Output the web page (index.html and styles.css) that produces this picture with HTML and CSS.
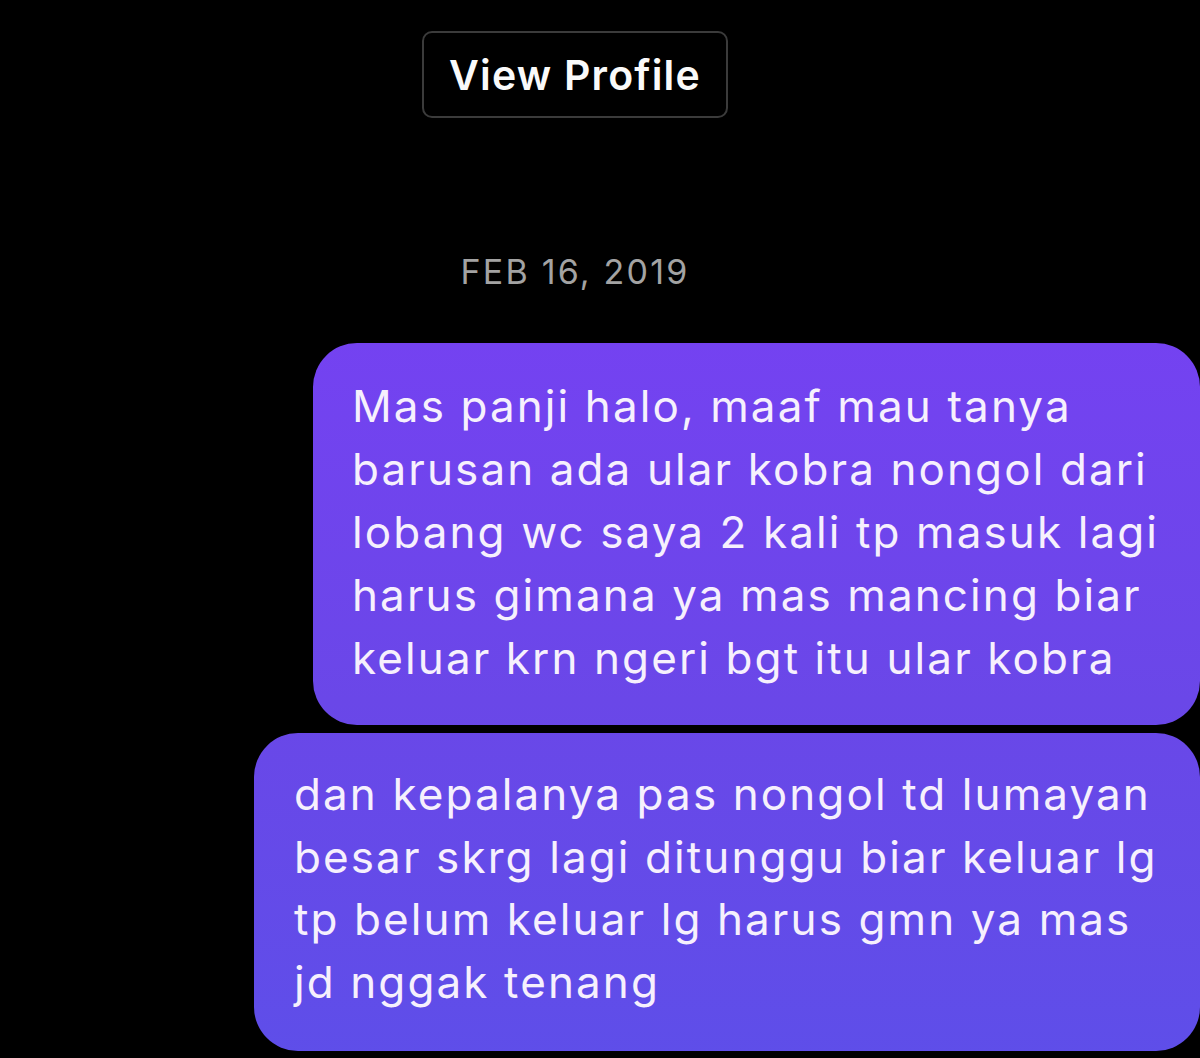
FILE: index.html
```html
<!DOCTYPE html>
<html lang="id">
<head>
<meta charset="utf-8">
<title>Chat</title>
<link rel="stylesheet" href="styles.css">
</head>
<body>
<div class="page">
  <div class="header">
    <div class="profile-btn">View Profile</div>
    <div class="date">FEB 16, 2019</div>
  </div>
  <div class="thread">
    <div class="bubble b1">
      <span class="line">Mas panji halo, maaf mau tanya</span>
      <span class="line">barusan ada ular kobra nongol dari</span>
      <span class="line">lobang wc saya 2 kali tp masuk lagi</span>
      <span class="line">harus gimana ya mas mancing biar</span>
      <span class="line">keluar krn ngeri bgt itu ular kobra</span>
    </div>
    <div class="bubble b2">
      <span class="line">dan kepalanya pas nongol td lumayan</span>
      <span class="line">besar skrg lagi ditunggu biar keluar lg</span>
      <span class="line">tp belum keluar lg harus gmn ya mas</span>
      <span class="line">jd nggak tenang</span>
    </div>
  </div>
</div>
</body>
</html>
```

FILE: styles.css
```css
html, body {
  margin: 0;
  padding: 0;
  background: #000;
  overflow: hidden;
}
body {
  font-family: Inter, "Noto Sans", "Liberation Sans", sans-serif;
  width: 1200px;
  height: 1058px;
}
.page {
  display: flex;
  flex-direction: column;
}
.header {
  width: 1150px;
  display: flex;
  flex-direction: column;
  align-items: center;
  padding-top: 31px;
}
.profile-btn {
  box-sizing: border-box;
  width: 306px;
  height: 87px;
  border: 2px solid #3b3b3b;
  border-radius: 10px;
  color: #fafafa;
  font-weight: 600;
  font-size: 41px;
  letter-spacing: 1.2px;
  display: flex;
  align-items: center;
  justify-content: center;
}
.date {
  margin-top: 133px;
  color: #a3a3a3;
  font-size: 34px;
  line-height: 42px;
  letter-spacing: 2.2px;
}
.thread {
  margin-top: 50px;
  display: flex;
  flex-direction: column;
  align-items: flex-end;
  gap: 8px;
}
.bubble {
  box-sizing: border-box;
  color: #f6f0fd;
  font-size: 44px;
  line-height: 63px;
  letter-spacing: 2.1px;
  border-radius: 44px;
  background: linear-gradient(180deg, #7442f1 340px, #6a47e8 700px, #5e4ee9 1060px);
  background-attachment: fixed;
  display: flex;
  flex-direction: column;
}
.line {
  white-space: nowrap;
}
.b1 {
  width: 887px;
  padding: 32px 40px 35px 39px;
}
.b2 {
  width: 946px;
  padding: 30px 40px 38px 40px;
  line-height: 62.5px;
}
```
